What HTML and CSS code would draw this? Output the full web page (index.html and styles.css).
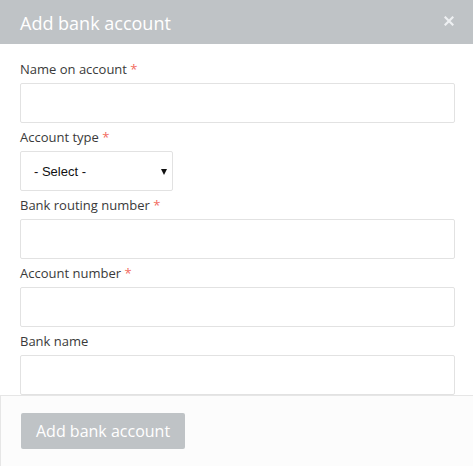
FILE: index.html
```html
<!DOCTYPE html>
<html>
<head>
<meta charset="utf-8">
<link rel="stylesheet" href="styles.css">
</head>
<body>
<div class="modal">
  <div class="modal-header">
    <h1 class="modal-title">Add bank account</h1>
    <button class="close" aria-label="Close">
      <svg width="10" height="10" viewBox="0 0 10 10"><path d="M1.5 1.5 L8.5 8.5 M8.5 1.5 L1.5 8.5" stroke="#eef0f2" stroke-width="2.2" stroke-linecap="square"/></svg>
    </button>
  </div>
  <div class="modal-body">
    <div class="field">
      <label class="label">Name on account <span class="req">*</span></label>
      <input class="input" type="text">
    </div>
    <div class="field">
      <label class="label">Account type <span class="req">*</span></label>
      <div class="select-wrap">
        <select class="select"><option>- Select -</option></select>
        <span class="arrow"></span>
      </div>
    </div>
    <div class="field">
      <label class="label">Bank routing number <span class="req">*</span></label>
      <input class="input" type="text">
    </div>
    <div class="field">
      <label class="label">Account number <span class="req">*</span></label>
      <input class="input" type="text">
    </div>
    <div class="field last">
      <label class="label">Bank name</label>
      <input class="input" type="text">
    </div>
  </div>
  <div class="modal-footer">
    <button class="btn">Add bank account</button>
  </div>
</div>
</body>
</html>
```

FILE: styles.css
```css
* { box-sizing: border-box; }
html, body { margin: 0; padding: 0; background: #fff; }
body { font-family: "Open Sans", "Liberation Sans", sans-serif; width: 473px; height: 466px; overflow: hidden; }

.modal { display: flex; flex-direction: column; }

.modal-header {
  height: 44px;
  background: #bfc3c6;
  display: flex;
  align-items: center;
  justify-content: space-between;
  padding: 0 20px 0 20px;
}
.modal-title {
  margin: 0;
  font-size: 18px;
  font-weight: 400;
  color: #ffffff;
  line-height: 24px;
  padding-top: 2px;
}
.close {
  border: 0;
  background: none;
  padding: 0;
  width: 10px;
  height: 10px;
  display: flex;
  margin-right: -1px;
  margin-top: -2px;
}

.modal-body {
  padding: 14px 18px 0 20px;
}
.field { display: flex; flex-direction: column; margin-bottom: 3px; }
.field.last { margin-bottom: 0; }
.label {
  font-size: 13px;
  line-height: 20px;
  color: #3a3a3a;
  padding-top: 1px;
  margin-bottom: 4px;
}
.req { color: #f26b5e; }

.input {
  height: 40px;
  width: 100%;
  border: 1px solid #e2e2e2;
  border-radius: 2px;
  background: #fff;
  margin: 0;
}

.select-wrap { position: relative; width: 153px; }
.select {
  appearance: none;
  -webkit-appearance: none;
  width: 153px;
  height: 40px;
  border: 1px solid #e2e2e2;
  border-radius: 2px;
  background: #fff;
  font-family: "Liberation Sans", Arial, sans-serif;
  font-size: 13px;
  color: #111;
  padding: 0 0 0 13px;
  margin: 0;
}
.arrow {
  position: absolute;
  left: 141px;
  top: 18px;
  width: 0;
  height: 0;
  border-left: 3.5px solid transparent;
  border-right: 3.5px solid transparent;
  border-top: 6px solid #111;
}

.modal-footer {
  border-top: 1px solid #e6e6e6;
  border-left: 1px solid #e6e6e6;
  background: #fcfcfc;
  padding: 17px 20px 20px 20px;
  flex: 1;
  height: 71px;
}
.btn {
  background: #bfc3c6;
  border: 0;
  border-radius: 2px;
  color: #fff;
  font-family: "Open Sans", "Liberation Sans", sans-serif;
  font-size: 16px;
  height: 36px;
  padding: 0 15px 0 15px;
  line-height: 36px;
}
```
